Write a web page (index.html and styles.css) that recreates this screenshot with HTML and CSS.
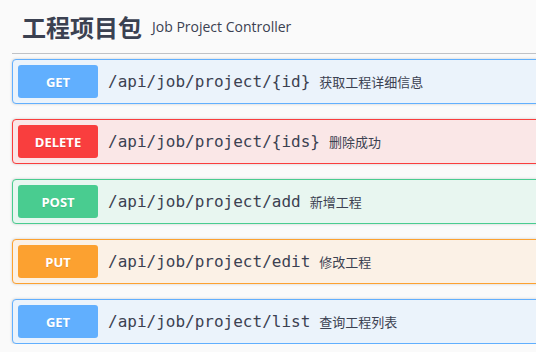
FILE: index.html
```html
<!DOCTYPE html>
<html lang="zh">
<head>
<meta charset="utf-8">
<link rel="stylesheet" href="styles.css">
</head>
<body>
<div class="wrap">
  <h4 class="tag">
    <span class="tag-name">工程项目包</span>
    <small class="tag-desc">Job Project Controller</small>
  </h4>
  <div class="ops">
    <div class="op op-get">
      <span class="method">GET</span>
      <span class="path">/api/job/project/{id}</span>
      <span class="summary">获取工程详细信息</span>
    </div>
    <div class="op op-delete">
      <span class="method">DELETE</span>
      <span class="path">/api/job/project/{ids}</span>
      <span class="summary">删除成功</span>
    </div>
    <div class="op op-post">
      <span class="method">POST</span>
      <span class="path">/api/job/project/add</span>
      <span class="summary">新增工程</span>
    </div>
    <div class="op op-put">
      <span class="method">PUT</span>
      <span class="path">/api/job/project/edit</span>
      <span class="summary">修改工程</span>
    </div>
    <div class="op op-get">
      <span class="method">GET</span>
      <span class="path">/api/job/project/list</span>
      <span class="summary">查询工程列表</span>
    </div>
  </div>
</div>
</body>
</html>
```

FILE: styles.css
```css
html, body {
  margin: 0;
  padding: 0;
  background: #fafafa;
  overflow: hidden;
}
body {
  font-family: "Open Sans", "Noto Sans CJK SC", sans-serif;
  color: #3b4151;
}
.wrap {
  width: 600px;
  padding-left: 12px;
}
.tag {
  display: flex;
  align-items: center;
  margin: 0 0 5px;
  padding: 10px 20px 10px 10px;
  height: 33px;
  border-bottom: 1px solid rgba(59, 65, 81, 0.3);
}
.tag-name {
  font-family: "Noto Sans CJK SC", sans-serif;
  font-size: 24px;
  font-weight: 700;
  color: #3b4151;
}
.tag-desc {
  font-family: "Open Sans", sans-serif;
  font-size: 14px;
  font-weight: 400;
  padding: 0 10px 0 10px;
  color: #3b4151;
}
.ops {
  display: flex;
  flex-direction: column;
  gap: 15px;
}
.op {
  display: flex;
  align-items: center;
  padding: 5px;
  border: 1px solid;
  border-radius: 4px;
  box-shadow: 0 0 3px rgba(0, 0, 0, 0.19);
}
.method {
  width: 80px;
  height: 33px;
  display: flex;
  align-items: center;
  justify-content: center;
  border-radius: 3px;
  color: #fff;
  font-family: "Open Sans", sans-serif;
  font-size: 13px;
  font-weight: 700;
  text-shadow: 0 1px 0 rgba(0, 0, 0, 0.1);
}
.path {
  padding: 0 9px 0 10px;
  font-family: "DejaVu Sans Mono", monospace;
  font-size: 16px;
  font-weight: 400;
  color: #3b4151;
}
.summary {
  font-family: "Noto Sans CJK SC", sans-serif;
  font-size: 13px;
  color: #3b4151;
}
.op-get { background: #ebf3fb; border-color: #61affe; }
.op-get .method { background: #61affe; }
.op-delete { background: #fae7e7; border-color: #f93e3e; }
.op-delete .method { background: #f93e3e; }
.op-post { background: #e8f6f0; border-color: #49cc90; }
.op-post .method { background: #49cc90; }
.op-put { background: #fbf1e6; border-color: #fca130; }
.op-put .method { background: #fca130; }
```
